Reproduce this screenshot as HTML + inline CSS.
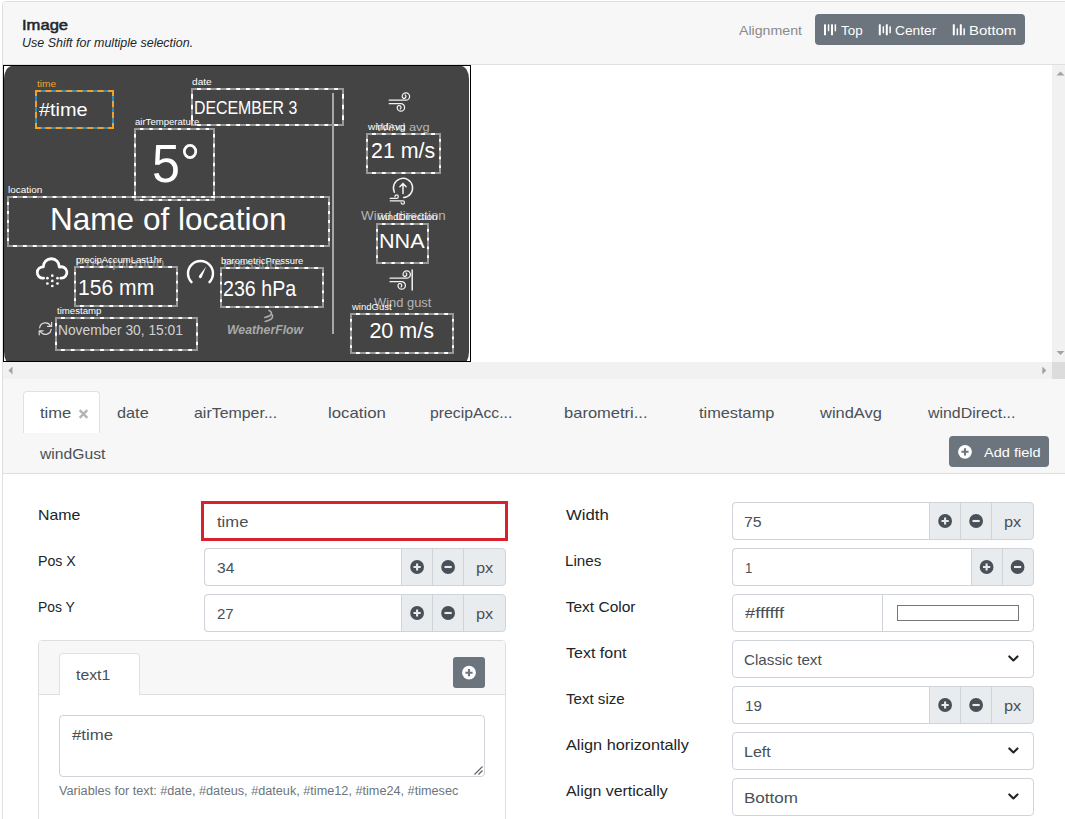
<!DOCTYPE html>
<html lang="en"><head><meta charset="utf-8"><title>Image field editor</title>
<style>
html,body{margin:0;padding:0;background:#fff;}
body{width:1065px;height:819px;overflow:hidden;font-family:"Liberation Sans",sans-serif;}
#page{position:relative;width:1065px;height:819px;overflow:hidden;background:#fff;}
#page div,#page span,#page svg{position:absolute;box-sizing:border-box;}
.t{white-space:nowrap;line-height:normal;transform-origin:0 0;display:block;}
.inp{background:#fff;border:1px solid #ced4da;border-radius:4px;}
.ad{background:#e9ecef;border:1px solid #ced4da;}
.f{border:2px solid #fff;}
.f i{position:absolute;display:block;left:-2px;top:-2px;right:-2px;bottom:-2px;border:2px dashed #999;}
.f.sel{border-color:#2b8cbe;}
.f.sel i{border-color:#f5a02a;}

</style></head>
<body>
<div id="page">
<div style="left:2px;top:1px;width:1080px;height:900px;border:1px solid #dfdfdf;border-radius:4px;background:#fff;"></div>
<div style="left:3px;top:2px;width:1070px;height:62px;background:#f7f7f7;border-radius:3px 3px 0 0;"></div>
<div style="left:3px;top:64px;width:1070px;height:1px;background:#dfdfdf;"></div>
<span class="t" style="left:21.60px;top:15.70px;font-size:15.52px;color:#212529;transform:scaleX(1.0681);-webkit-text-stroke:0.55px #212529;">Image</span>
<span class="t" style="left:22.20px;top:36.00px;font-size:12.42px;color:#212529;font-style:italic;transform:scaleX(1.0048);">Use Shift for multiple selection.</span>
<span class="t" style="left:738.70px;top:23.00px;font-size:13.58px;color:#8a8a8a;transform:scaleX(1.0429);">Alignment</span>
<div style="left:815px;top:14px;width:210px;height:31px;background:#6c757d;border-radius:4px;"></div>
<svg style="left:0;top:0" width="1065" height="60"><rect x="824.0" y="24.3" width="2" height="11" rx="0.5" fill="#fff"/><rect x="827.8" y="24.3" width="1.5" height="7" rx="0.5" fill="#fff"/><rect x="831.0" y="24.3" width="2" height="11" rx="0.5" fill="#fff"/><rect x="834.6" y="24.3" width="1.5" height="7" rx="0.5" fill="#fff"/><rect x="878.8" y="24.3" width="2" height="11" rx="0.5" fill="#fff"/><rect x="882.6" y="26.3" width="1.5" height="7" rx="0.5" fill="#fff"/><rect x="885.8" y="24.3" width="2" height="11" rx="0.5" fill="#fff"/><rect x="889.4" y="26.3" width="1.5" height="7" rx="0.5" fill="#fff"/><rect x="952.8" y="24.3" width="2" height="11" rx="0.5" fill="#fff"/><rect x="956.6" y="28.3" width="1.5" height="7" rx="0.5" fill="#fff"/><rect x="959.8" y="24.3" width="2" height="11" rx="0.5" fill="#fff"/><rect x="963.4" y="28.3" width="1.5" height="7" rx="0.5" fill="#fff"/></svg>
<span class="t" style="left:840.70px;top:22.80px;font-size:13.58px;color:#fff;transform:scaleX(0.9885);">Top</span>
<span class="t" style="left:895.29px;top:22.80px;font-size:13.58px;color:#fff;transform:scaleX(1.0141);">Center</span>
<span class="t" style="left:968.89px;top:22.80px;font-size:13.58px;color:#fff;transform:scaleX(1.0995);">Bottom</span>
<div style="left:3px;top:65px;width:468px;height:297px;background:#fff;border:1px solid #000;"></div>
<div style="left:4px;top:66px;width:465px;height:295px;background:#fff;overflow:hidden;"><div style="left:0;top:0;width:465px;height:299px;background:#444;border-radius:8px/13px;"></div></div>
<div style="left:1052px;top:65px;width:17px;height:297px;background:#f1f1f1;"></div>
<svg style="left:1052px;top:65px" width="17" height="297"><path d="M4.5 10.5 L8.5 6.5 L12.5 10.5Z" fill="#a3a3a3"/><path d="M4.5 286 L12.5 286 L8.5 290Z" fill="#a3a3a3"/></svg>
<div style="left:3px;top:362px;width:1070px;height:17px;background:#f1f1f1;"></div>
<svg style="left:3px;top:362px" width="1062" height="17"><path d="M9.5 4.5 L5.5 8.5 L9.5 12.5Z" fill="#a3a3a3"/><path d="M1039.3 4.5 L1043.3 8.5 L1039.3 12.5Z" fill="#a3a3a3"/></svg>
<div style="left:1052px;top:362px;width:17px;height:17px;background:#dcdcdc;"></div>
<div style="left:332px;top:93px;width:2px;height:241px;background:#a8a8a8;"></div>
<span class="t" style="left:74.71px;top:255.20px;font-size:13.58px;color:#8c8c8c;transform:scaleX(1.2000);">Precipitation</span>
<span class="t" style="left:222.80px;top:255.60px;font-size:13.58px;color:#8c8c8c;transform:scaleX(1.0914);">Pressure</span>
<span class="t" style="left:375.70px;top:119.80px;font-size:11.83px;color:#b5b5b5;transform:scaleX(1.0896);">Wind avg</span>
<span class="t" style="left:361.00px;top:209.20px;font-size:12.42px;color:#b5b5b5;transform:scaleX(1.0789);">Wind direction</span>
<span class="t" style="left:373.90px;top:295.90px;font-size:12.61px;color:#b5b5b5;transform:scaleX(1.0239);">Wind gust</span>
<div class="f sel" style="left:35px;top:90px;width:79px;height:39px"><i></i></div>
<span class="t" style="left:36.90px;top:77.90px;font-size:9.70px;color:#f5a02a;transform:scaleX(1.0432);">time</span>
<span class="t" style="left:39.00px;top:99.25px;font-size:18.43px;color:#fff;transform:scaleX(1.0809);">#time</span>
<div class="f" style="left:191px;top:88px;width:153px;height:38px"><i></i></div>
<span class="t" style="left:192.18px;top:76.00px;font-size:9.70px;color:#fff;transform:scaleX(1.0451);">date</span>
<span class="t" style="left:194.24px;top:97.60px;font-size:17.65px;color:#fff;transform:scaleX(0.9001);">DECEMBER 3</span>
<div class="f" style="left:134px;top:128px;width:81px;height:73px"><i></i></div>
<span class="t" style="left:135.41px;top:115.90px;font-size:9.70px;color:#fff;transform:scaleX(0.9854);">airTemperature</span>
<span class="t" style="left:151.63px;top:133.40px;font-size:53.35px;color:#fff;transform:scaleX(0.9430);">5°</span>
<div class="f" style="left:7px;top:196px;width:323px;height:51px"><i></i></div>
<span class="t" style="left:8.38px;top:183.60px;font-size:9.70px;color:#fff;transform:scaleX(1.0267);">location</span>
<span class="t" style="left:49.74px;top:202.10px;font-size:30.65px;color:#fff;transform:scaleX(1.0293);">Name of location</span>
<div class="f" style="left:74px;top:266px;width:104px;height:41px"><i></i></div>
<span class="t" style="left:75.61px;top:253.80px;font-size:9.70px;color:#fff;transform:scaleX(0.9762);">precipAccumLast1hr</span>
<span class="t" style="left:77.70px;top:275.00px;font-size:22.37px;color:#fff;transform:scaleX(0.9436);">156 mm</span>
<div class="f" style="left:220px;top:267px;width:104px;height:41px"><i></i></div>
<span class="t" style="left:221.42px;top:254.70px;font-size:9.70px;color:#fff;transform:scaleX(0.9744);">barometricPressure</span>
<span class="t" style="left:223.13px;top:275.80px;font-size:22.37px;color:#fff;transform:scaleX(0.8784);">236 hPa</span>
<div class="f" style="left:55px;top:317px;width:143px;height:34px"><i></i></div>
<span class="t" style="left:57.40px;top:304.60px;font-size:9.70px;color:#fff;transform:scaleX(0.9922);">timestamp</span>
<span class="t" style="left:58.08px;top:322.20px;font-size:14.74px;color:#d2d2d2;transform:scaleX(0.9355);">November 30, 15:01</span>
<div class="f" style="left:366px;top:133px;width:75px;height:41px"><i></i></div>
<span class="t" style="left:367.80px;top:121.00px;font-size:9.70px;color:#fff;transform:scaleX(1.0307);">windAvg</span>
<span class="t" style="left:370.91px;top:138.00px;font-size:21.56px;color:#fff;transform:scaleX(0.9917);">21 m/s</span>
<div class="f" style="left:376px;top:223px;width:53px;height:41px"><i></i></div>
<span class="t" style="left:377.60px;top:210.60px;font-size:9.70px;color:#fff;transform:scaleX(1.0255);">windDirection</span>
<span class="t" style="left:378.95px;top:229.00px;font-size:20.95px;color:#fff;transform:scaleX(1.0315);">NNA</span>
<div class="f" style="left:350px;top:313px;width:104px;height:41px"><i></i></div>
<span class="t" style="left:351.80px;top:300.60px;font-size:9.70px;color:#fff;transform:scaleX(0.9818);">windGust</span>
<span class="t" style="left:369.40px;top:317.60px;font-size:21.56px;color:#fff;">20 m/s</span>
<span class="t" style="left:226.64px;top:322.30px;font-size:12.90px;color:#a9a9a9;font-weight:bold;font-style:italic;transform:scaleX(0.9511);">WeatherFlow</span>
<svg style="left:0;top:0" width="480" height="365" fill="none" stroke="#f2f2f2" stroke-width="1.25" stroke-linecap="round" stroke-linejoin="round">
<path d="M43.6 278.2 H42.9 A5.7 5.7 0 1 1 43.31 266.81 A8.0 8.0 0 1 1 59.30 267.13 A5.7 5.7 0 1 1 61.2 278.2 H60.8" stroke="#fff" stroke-width="2.8"/><circle cx="52.3" cy="275.7" r="1.35" fill="#fff" stroke="none"/><circle cx="47.4" cy="278.2" r="1.35" fill="#fff" stroke="none"/><circle cx="57.5" cy="278.2" r="1.35" fill="#fff" stroke="none"/><circle cx="52.3" cy="280.9" r="1.35" fill="#fff" stroke="none"/><circle cx="47.4" cy="283.5" r="1.35" fill="#fff" stroke="none"/><circle cx="57.5" cy="283.5" r="1.35" fill="#fff" stroke="none"/><circle cx="52.3" cy="286.0" r="1.35" fill="#fff" stroke="none"/>
<path d="M191.51 282.18 A12.5 12.5 0 1 1 209.49 282.18" stroke="#fff" stroke-width="2.4"/><path d="M206.2 266.6 L201.6 277.6 A1.6 1.6 0 0 1 198.9 276.0 Z" fill="#fff" stroke="none"/>
<path d="M389.2 100.2 H405.9 a3.7 3.7 0 1 0 -3.7 -3.7 a1.9 1.9 0 1 0 3.0 -1.6"/><path d="M389.2 103.7 H400.9 a3.7 3.7 0 1 1 -3.7 3.7 a1.9 1.9 0 1 1 3.0 1.6"/><path d="M390.0 278.2 H406.7 a3.7 3.7 0 1 0 -3.7 -3.7 a1.9 1.9 0 1 0 3.0 -1.6"/><path d="M390.0 281.7 H401.7 a3.7 3.7 0 1 1 -3.7 3.7 a1.9 1.9 0 1 1 3.0 1.6"/><path d="M412.2 270.1 V289.9" stroke-width="1.5"/><path d="M394.37 192.21 A9.6 9.6 0 1 1 403.67 197.58" stroke-width="1.5"/><path d="M403 193.6 V183.6 M399.9 186.7 L403 183.4 L406.1 186.7" stroke-width="1.5"/><path d="M390.2 198.4 H396.6 a1.7 1.7 0 1 0 -1.7 -1.7" /><path d="M390.2 200.8 H402.8 a1.7 1.7 0 1 1 -1.7 1.7" /><g stroke="#dcdcdc" stroke-width="1.2"><path d="M39.66 327.79 A5.8 5.8 0 0 1 50.52 325.88"/><path d="M51.14 329.41 A5.8 5.8 0 0 1 40.28 331.32"/><path d="M51.6 322.4 V326.4 H47.6 M39.2 334.8 V330.8 H43.2"/></g><g stroke="#adadad" stroke-width="1.6"><path d="M269 310.4 C271.8 311.6 272.4 314.2 269.8 315.8 C268.2 316.7 266.6 317.1 264.8 317.5"/><path d="M272.3 314.9 C273.4 317.2 271.6 319 269.4 320 C268 320.6 266.6 321 265.2 321.4"/></g>
</svg>
<div style="left:3px;top:379px;width:1070px;height:94px;background:#f7f7f7;"></div>
<div style="left:3px;top:473px;width:1070px;height:1px;background:#dfdfdf;"></div>
<div style="left:23px;top:391px;width:77px;height:42px;background:#fff;border:1px solid #dee2e6;border-bottom:none;border-radius:4px 4px 0 0;"></div>
<span class="t" style="left:39.59px;top:403.50px;font-size:15.52px;color:#495057;transform:scaleX(1.0672);">time</span>
<svg style="left:78px;top:408px" width="12" height="12"><path d="M1.7 2.2 L9.3 9.8 M9.3 2.2 L1.7 9.8" stroke="#b4b4b4" stroke-width="2.4" fill="none"/></svg>
<span class="t" style="left:116.77px;top:403.50px;font-size:15.52px;color:#495057;transform:scaleX(1.0492);">date</span>
<span class="t" style="left:193.88px;top:403.50px;font-size:15.52px;color:#495057;transform:scaleX(1.0258);">airTemper...</span>
<span class="t" style="left:327.72px;top:403.50px;font-size:15.52px;color:#495057;transform:scaleX(1.0823);">location</span>
<span class="t" style="left:430.48px;top:403.50px;font-size:15.52px;color:#495057;transform:scaleX(1.0158);">precipAcc...</span>
<span class="t" style="left:563.94px;top:403.50px;font-size:15.52px;color:#495057;transform:scaleX(1.0648);">barometri...</span>
<span class="t" style="left:698.99px;top:403.50px;font-size:15.52px;color:#495057;transform:scaleX(1.0531);">timestamp</span>
<span class="t" style="left:820.01px;top:403.50px;font-size:15.52px;color:#495057;transform:scaleX(1.0600);">windAvg</span>
<span class="t" style="left:927.50px;top:403.50px;font-size:15.52px;color:#495057;transform:scaleX(1.0242);">windDirect...</span>
<span class="t" style="left:39.90px;top:445.00px;font-size:15.52px;color:#495057;transform:scaleX(1.0112);">windGust</span>
<div style="left:949px;top:436px;width:100px;height:31px;background:#6c757d;border-radius:4px;"></div>
<svg style="left:957px;top:444px" width="16" height="16"><circle cx="8" cy="7.8" r="6.9" fill="#fff"/><path d="M8 4.2v7.2M4.4 7.8h7.2" stroke="#6c757d" stroke-width="2.1" fill="none"/></svg>
<span class="t" style="left:983.60px;top:444.70px;font-size:13.58px;color:#fff;transform:scaleX(1.0732);">Add field</span>
<span class="t" style="left:37.57px;top:505.70px;font-size:15.52px;color:#212529;transform:scaleX(1.0236);">Name</span>
<div style="left:201px;top:501px;width:307px;height:40px;background:#fff;border:3px solid #d9212d;"></div>
<span class="t" style="left:217.09px;top:512.80px;font-size:15.52px;color:#495057;transform:scaleX(1.0707);">time</span>
<span class="t" style="left:37.70px;top:551.60px;font-size:15.52px;color:#212529;transform:scaleX(0.9136);">Pos X</span>
<div style="left:204px;top:548px;width:301.5px;height:38px;background:#e9ecef;border:1px solid #ced4da;border-radius:4px;"></div>
<div style="left:204px;top:548px;width:198.10000000000002px;height:38px;background:#fff;border:1px solid #ced4da;border-radius:4px 0 0 4px;"></div>
<div style="left:432px;top:548px;width:1px;height:38px;background:#ced4da;"></div>
<div style="left:463px;top:548px;width:1px;height:38px;background:#ced4da;"></div>
<svg style="left:0;top:548px" width="1065" height="38"><circle cx="417.1" cy="19" r="6.9" fill="#495057"/><path d="M413.5 19h7.2M417.1 15.4v7.2" stroke="#e9ecef" stroke-width="2.1" fill="none"/><circle cx="448.1" cy="19" r="6.9" fill="#495057"/><path d="M444.5 19h7.2" stroke="#e9ecef" stroke-width="2.1" fill="none"/></svg>
<span class="t" style="left:475.54px;top:558.80px;font-size:15.52px;color:#495057;transform:scaleX(1.0571);">px</span>
<span class="t" style="left:216.80px;top:559.00px;font-size:15.52px;color:#495057;transform:scaleX(1.0042);">34</span>
<span class="t" style="left:37.72px;top:597.70px;font-size:15.52px;color:#212529;transform:scaleX(0.8961);">Pos Y</span>
<div style="left:204px;top:594px;width:301.5px;height:38px;background:#e9ecef;border:1px solid #ced4da;border-radius:4px;"></div>
<div style="left:204px;top:594px;width:198.10000000000002px;height:38px;background:#fff;border:1px solid #ced4da;border-radius:4px 0 0 4px;"></div>
<div style="left:432px;top:594px;width:1px;height:38px;background:#ced4da;"></div>
<div style="left:463px;top:594px;width:1px;height:38px;background:#ced4da;"></div>
<svg style="left:0;top:594px" width="1065" height="38"><circle cx="417.1" cy="19" r="6.9" fill="#495057"/><path d="M413.5 19h7.2M417.1 15.4v7.2" stroke="#e9ecef" stroke-width="2.1" fill="none"/><circle cx="448.1" cy="19" r="6.9" fill="#495057"/><path d="M444.5 19h7.2" stroke="#e9ecef" stroke-width="2.1" fill="none"/></svg>
<span class="t" style="left:475.54px;top:604.80px;font-size:15.52px;color:#495057;transform:scaleX(1.0571);">px</span>
<span class="t" style="left:216.62px;top:605.00px;font-size:15.52px;color:#495057;transform:scaleX(0.9665);">27</span>
<span class="t" style="left:566.00px;top:505.70px;font-size:15.52px;color:#212529;transform:scaleX(1.0791);">Width</span>
<div style="left:732px;top:502px;width:301.5px;height:38px;background:#e9ecef;border:1px solid #ced4da;border-radius:4px;"></div>
<div style="left:732px;top:502px;width:198.10000000000002px;height:38px;background:#fff;border:1px solid #ced4da;border-radius:4px 0 0 4px;"></div>
<div style="left:960px;top:502px;width:1px;height:38px;background:#ced4da;"></div>
<div style="left:991px;top:502px;width:1px;height:38px;background:#ced4da;"></div>
<svg style="left:0;top:502px" width="1065" height="38"><circle cx="945.1" cy="19" r="6.9" fill="#495057"/><path d="M941.5 19h7.2M945.1 15.4v7.2" stroke="#e9ecef" stroke-width="2.1" fill="none"/><circle cx="976.1" cy="19" r="6.9" fill="#495057"/><path d="M972.5 19h7.2" stroke="#e9ecef" stroke-width="2.1" fill="none"/></svg>
<span class="t" style="left:1003.54px;top:512.80px;font-size:15.52px;color:#495057;transform:scaleX(1.0571);">px</span>
<span class="t" style="left:744.18px;top:513.00px;font-size:15.52px;color:#495057;transform:scaleX(1.0232);">75</span>
<span class="t" style="left:564.82px;top:551.60px;font-size:15.52px;color:#212529;transform:scaleX(0.9819);">Lines</span>
<div style="left:732px;top:548px;width:301.5px;height:38px;background:#e9ecef;border:1px solid #ced4da;border-radius:4px;"></div>
<div style="left:732px;top:548px;width:239.60000000000002px;height:38px;background:#fff;border:1px solid #ced4da;border-radius:4px 0 0 4px;"></div>
<div style="left:1002px;top:548px;width:1px;height:38px;background:#ced4da;"></div>
<svg style="left:0;top:548px" width="1065" height="38"><circle cx="986.6" cy="19" r="6.9" fill="#495057"/><path d="M983.0 19h7.2M986.6 15.4v7.2" stroke="#e9ecef" stroke-width="2.1" fill="none"/><circle cx="1017.6" cy="19" r="6.9" fill="#495057"/><path d="M1014.0 19h7.2" stroke="#e9ecef" stroke-width="2.1" fill="none"/></svg>
<span class="t" style="left:745.23px;top:559.00px;font-size:15.52px;color:#495057;transform:scaleX(0.8500);">1</span>
<span class="t" style="left:565.70px;top:597.70px;font-size:15.52px;color:#212529;">Text Color</span>
<div style="left:732px;top:594px;width:301.5px;height:38px;background:#fff;border:1px solid #ced4da;border-radius:4px;"></div>
<div style="left:882px;top:594px;width:1px;height:38px;background:#ced4da;"></div>
<span class="t" style="left:744.70px;top:604.00px;font-size:15.52px;color:#495057;transform:scaleX(1.1782);">#ffffff</span>
<div style="left:897px;top:605px;width:122px;height:16px;background:#fff;border:1px solid #767676;"></div>
<span class="t" style="left:565.69px;top:643.60px;font-size:15.52px;color:#212529;transform:scaleX(1.0318);">Text font</span>
<div style="left:732px;top:640px;width:301.5px;height:38px;background:#fff;border:1px solid #ced4da;border-radius:4px;"></div>
<span class="t" style="left:744.21px;top:651.10px;font-size:15.52px;color:#495057;transform:scaleX(0.9793);">Classic text</span>
<svg style="left:1002px;top:650px" width="24" height="18"><path d="M7.3 6.4 L11.4 10.5 L15.5 6.4" stroke="#212529" stroke-width="2.1" fill="none" stroke-linecap="round" stroke-linejoin="round"/></svg>
<span class="t" style="left:565.71px;top:689.70px;font-size:15.52px;color:#212529;transform:scaleX(0.9724);">Text size</span>
<div style="left:732px;top:686px;width:301.5px;height:38px;background:#e9ecef;border:1px solid #ced4da;border-radius:4px;"></div>
<div style="left:732px;top:686px;width:198.10000000000002px;height:38px;background:#fff;border:1px solid #ced4da;border-radius:4px 0 0 4px;"></div>
<div style="left:960px;top:686px;width:1px;height:38px;background:#ced4da;"></div>
<div style="left:991px;top:686px;width:1px;height:38px;background:#ced4da;"></div>
<svg style="left:0;top:686px" width="1065" height="38"><circle cx="945.1" cy="19" r="6.9" fill="#495057"/><path d="M941.5 19h7.2M945.1 15.4v7.2" stroke="#e9ecef" stroke-width="2.1" fill="none"/><circle cx="976.1" cy="19" r="6.9" fill="#495057"/><path d="M972.5 19h7.2" stroke="#e9ecef" stroke-width="2.1" fill="none"/></svg>
<span class="t" style="left:1003.54px;top:696.80px;font-size:15.52px;color:#495057;transform:scaleX(1.0571);">px</span>
<span class="t" style="left:745.23px;top:697.00px;font-size:15.52px;color:#495057;transform:scaleX(0.9721);">19</span>
<span class="t" style="left:566.00px;top:735.70px;font-size:15.52px;color:#212529;transform:scaleX(1.0472);">Align horizontally</span>
<div style="left:732px;top:732px;width:301.5px;height:38px;background:#fff;border:1px solid #ced4da;border-radius:4px;"></div>
<span class="t" style="left:743.66px;top:743.10px;font-size:15.52px;color:#495057;transform:scaleX(1.0336);">Left</span>
<svg style="left:1002px;top:742px" width="24" height="18"><path d="M7.3 6.4 L11.4 10.5 L15.5 6.4" stroke="#212529" stroke-width="2.1" fill="none" stroke-linecap="round" stroke-linejoin="round"/></svg>
<span class="t" style="left:566.00px;top:781.70px;font-size:15.52px;color:#212529;transform:scaleX(1.0250);">Align vertically</span>
<div style="left:732px;top:778px;width:301.5px;height:38px;background:#fff;border:1px solid #ced4da;border-radius:4px;"></div>
<span class="t" style="left:743.58px;top:789.10px;font-size:15.52px;color:#495057;transform:scaleX(1.0970);">Bottom</span>
<svg style="left:1002px;top:788px" width="24" height="18"><path d="M7.3 6.4 L11.4 10.5 L15.5 6.4" stroke="#212529" stroke-width="2.1" fill="none" stroke-linecap="round" stroke-linejoin="round"/></svg>
<div style="left:38px;top:640px;width:468px;height:200px;background:#fff;border:1px solid #dfdfdf;border-radius:4px;"></div>
<div style="left:39px;top:641px;width:466px;height:54px;background:#f7f7f7;border-radius:3px 3px 0 0;"></div>
<div style="left:39px;top:694px;width:466px;height:1px;background:#dfdfdf;"></div>
<div style="left:59px;top:653px;width:81px;height:42px;background:#fff;border:1px solid #dee2e6;border-bottom:none;border-radius:4px 4px 0 0;"></div>
<span class="t" style="left:75.90px;top:666.00px;font-size:15.52px;color:#495057;transform:scaleX(1.0179);">text1</span>
<div style="left:453px;top:657px;width:32px;height:31px;background:#6c757d;border-radius:3px;"></div>
<svg style="left:461px;top:664px" width="16" height="16"><circle cx="8" cy="8.7" r="6.9" fill="#fff"/><path d="M8 5.1v7.2M4.4 8.7h7.2" stroke="#6c757d" stroke-width="2.1" fill="none"/></svg>
<div style="left:59px;top:715px;width:426px;height:62px;background:#fff;border:1px solid #ced4da;border-radius:4px;"></div>
<span class="t" style="left:71.80px;top:725.50px;font-size:15.52px;color:#495057;transform:scaleX(1.0826);">#time</span>
<svg style="left:473px;top:765px" width="12" height="12"><path d="M1.5 9.5 L9.5 1.5 M5.5 9.5 L9.5 5.5" stroke="#5f5f5f" stroke-width="1.1" fill="none"/></svg>
<span class="t" style="left:59.20px;top:783.80px;font-size:12.42px;color:#6c757d;transform:scaleX(1.0218);">Variables for text: #date, #dateus, #dateuk, #time12, #time24, #timesec</span>
</div>
</body></html>
